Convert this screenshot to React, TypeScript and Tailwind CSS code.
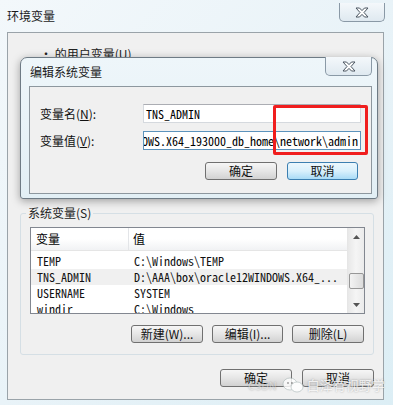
import React from "react";

const CJK = { fontFamily: '"Noto Sans CJK SC", "Microsoft YaHei", sans-serif' };
const MONO = { fontFamily: '"Noto Sans Mono CJK SC", "Liberation Mono", monospace' };

function CloseX() {
  return (
    <svg width="16" height="11" viewBox="0 0 16 11">
      <path
        d="M2 1 L5.5 1 L8 3.6 L10.5 1 L14 1 L10 5.5 L14 10 L10.5 10 L8 7.4 L5.5 10 L2 10 L6 5.5 Z"
        fill="#ffffff"
        stroke="#4a5560"
        strokeWidth="1"
        strokeLinejoin="round"
      />
    </svg>
  );
}

function CloseBtn({ w }: { w: string }) {
  return (
    <div
      className={`${w} h-[19px] flex items-center justify-center rounded-b-[5px] border border-t-0 border-[#8a99a6] bg-gradient-to-b from-[#f4f8fb] to-[#dfe9f0]`}
    >
      <CloseX />
    </div>
  );
}

function Btn({
  children,
  w,
  blue,
}: {
  children: React.ReactNode;
  w: string;
  blue?: boolean;
}) {
  return (
    <div
      className={`${w} h-[18px] flex items-center justify-center rounded-[3px] border text-[12px] leading-none text-[#111] ${
        blue
          ? "border-[#3c7fb1] bg-gradient-to-b from-[#ecf7fd] via-[#d9f0fc] to-[#a9dbf6]"
          : "border-[#707070] bg-gradient-to-b from-[#f6f6f6] via-[#e6e6e6] to-[#d2d2d2]"
      }`}
      style={CJK}
    >
      {children}
    </div>
  );
}

const rows = [
  { n: "TEMP", v: "C:\\Windows\\TEMP" },
  { n: "TNS_ADMIN", v: "D:\\AAA\\box\\oracle12WINDOWS.X64_...", sel: true },
  { n: "USERNAME", v: "SYSTEM" },
  { n: "windir", v: "C:\\Windows" },
];

export default function App() {
  return (
    <div
      className="relative w-[393px] h-[405px] overflow-hidden bg-gradient-to-br from-[#f3f8fb] via-[#e9f3f8] to-[#dceef5] flex flex-col"
      style={CJK}
    >
      {/* outer title bar */}
      <div className="h-[32px] flex items-start shrink-0">
        <div className="pl-[7px] pt-[9px] text-[12px] leading-[14px] text-[#1a1a1a]">环境变量</div>
        <div className="ml-auto mr-[8px] mt-[3px]">
          <CloseBtn w="w-[46px]" />
        </div>
      </div>

      {/* outer content panel */}
      <div className="ml-[7px] w-[377px] h-[368px] border border-[#9aa3a9] bg-[#f0f0f0] flex flex-col shrink-0">
        {/* user variables group (mostly hidden) */}
        <div className="h-[180px] pl-[32px] pt-[14px] text-[12px] leading-[14px] text-[#222]">
          · 的用户变量(U)
        </div>

        {/* system variables group */}
        <div className="ml-[12px] w-[354px] h-[142px] relative border border-[#d5dfe5] rounded-[3px] flex flex-col">
          <div className="absolute left-[5px] -top-[8px] px-[2px] bg-[#f0f0f0] text-[12px] leading-[14px] text-[#222]">
            系统变量(S)
          </div>
          {/* list view */}
          <div className="mt-[13px] ml-[9px] w-[335px] h-[87px] border border-[#828790] bg-white flex overflow-hidden">
            <div className="flex-1 flex flex-col">
              <div className="h-[23px] flex bg-gradient-to-b from-white via-white to-[#f1f2f4] border-b border-[#e5e5e5] shrink-0">
                <div className="w-[98px] pl-[5px] flex items-center text-[12px] border-r border-[#e3e5e8]">变量</div>
                <div className="pl-[4px] flex items-center text-[12px]">值</div>
              </div>
              <div className="pt-[2px]">
                {rows.map((r) => (
                  <div
                    key={r.n}
                    className={`h-[16px] flex items-center text-[12px] leading-none text-[#111] ${r.sel ? "bg-[#f0f0f0]" : ""}`}
                    style={MONO}
                  >
                    <div className="w-[98px] pl-[6px] whitespace-nowrap">{r.n}</div>
                    <div className="pl-[5px] whitespace-nowrap">{r.v}</div>
                  </div>
                ))}
              </div>
            </div>
            {/* scrollbar */}
            <div className="w-[17px] bg-gradient-to-r from-[#e8e8e8] via-[#f5f5f5] to-[#ebebeb] border-l border-[#e6e6e6] flex flex-col items-center">
              <div className="h-[17px] flex items-center justify-center">
                <svg width="7" height="4" viewBox="0 0 7 4">
                  <path d="M0 4 L3.5 0 L7 4 Z" fill="#555" />
                </svg>
              </div>
              <div className="mt-[28px] w-[15px] h-[16px] rounded-[2px] border border-[#979797] bg-gradient-to-r from-[#f3f3f3] to-[#dcdcdc]" />
              <div className="mt-auto h-[17px] flex items-center justify-center">
                <svg width="7" height="4" viewBox="0 0 7 4">
                  <path d="M0 0 L7 0 L3.5 4 Z" fill="#555" />
                </svg>
              </div>
            </div>
          </div>
          {/* buttons */}
          <div className="mt-[11px] mr-[9px] flex justify-end gap-[9px]">
            <Btn w="w-[72px]">新建(W)...</Btn>
            <Btn w="w-[71px]">编辑(I)...</Btn>
            <Btn w="w-[72px]">删除(L)</Btn>
          </div>
        </div>

        {/* bottom buttons */}
        <div className="mt-[14px] mr-[9px] flex justify-end gap-[10px]">
          <Btn w="w-[72px]">确定</Btn>
          <Btn w="w-[72px]">取消</Btn>
        </div>
      </div>

      {/* inner dialog (overlay) */}
      <div className="absolute left-[20px] top-[57px] w-[358px] h-[142px] rounded-t-[7px] rounded-b-[3px] border border-[#6e7b85] bg-gradient-to-b from-[#eef6fa] to-[#e2eff5] shadow-[0_2px_8px_rgba(0,0,0,0.35)] flex flex-col">
        <div className="h-[28px] flex items-start shrink-0">
          <div className="pl-[9px] pt-[7px] text-[12px] leading-[14px] text-[#1a1a1a]">编辑系统变量</div>
          <div className="ml-auto mr-[5px] -mt-px">
            <CloseBtn w="w-[47px]" />
          </div>
        </div>
        <div className="ml-[8px] mr-[5px] h-[108px] border border-[#8d979e] bg-[#f0f0f0] flex flex-col">
          <div className="mt-[17px] flex items-center">
            <div className="w-[113px] pl-[10px] text-[12px] text-[#111]">
              变量名(<span className="underline">N</span>):
            </div>
            <div className="w-[218px] h-[19px] border border-[#d5d9de] border-t-[#abadb3] bg-white flex items-center pl-[2px] text-[12px] leading-none" style={MONO}>
              TNS_ADMIN
            </div>
          </div>
          <div className="mt-[8px] flex items-center">
            <div className="w-[113px] pl-[10px] text-[12px] text-[#111]">
              变量值(<span className="underline">V</span>):
            </div>
            <div className="w-[218px] h-[19px] border border-[#5c93bc] bg-white flex items-center justify-end overflow-hidden pr-[2px] text-[12px] leading-none whitespace-nowrap" style={MONO}>
              D:\AAA\box\oracle12WINDOWS.X64_193000_db_home\network\admin
            </div>
          </div>
          <div className="mt-[12px] ml-[175px] flex gap-[10px]">
            <Btn w="w-[72px]">确定</Btn>
            <Btn w="w-[71px]" blue>
              取消
            </Btn>
          </div>
        </div>
      </div>

      {/* red highlight */}
      <div className="absolute left-[273px] top-[105px] w-[95px] h-[50px] border-[3px] border-[#f01e1e] rounded-[2px]" />

      {/* watermark */}
      <div className="absolute left-[248px] top-[375px] flex items-center gap-[3px] text-[13px] text-white/80 [text-shadow:0_0_2px_rgba(0,0,0,0.35)]">
        <span className="text-[11px] text-white/50">CSDN</span>
        <svg width="22" height="16" viewBox="0 0 22 16" className="ml-[2px] opacity-80">
          <ellipse cx="8" cy="7" rx="7" ry="6" fill="#ffffff" stroke="#9aa" strokeWidth="0.6" />
          <ellipse cx="15" cy="10" rx="6" ry="5" fill="#ffffff" stroke="#9aa" strokeWidth="0.6" />
          <circle cx="6" cy="6" r="0.9" fill="#888" />
          <circle cx="10" cy="6" r="0.9" fill="#888" />
        </svg>
        <span>白泽有视野学</span>
      </div>
    </div>
  );
}
